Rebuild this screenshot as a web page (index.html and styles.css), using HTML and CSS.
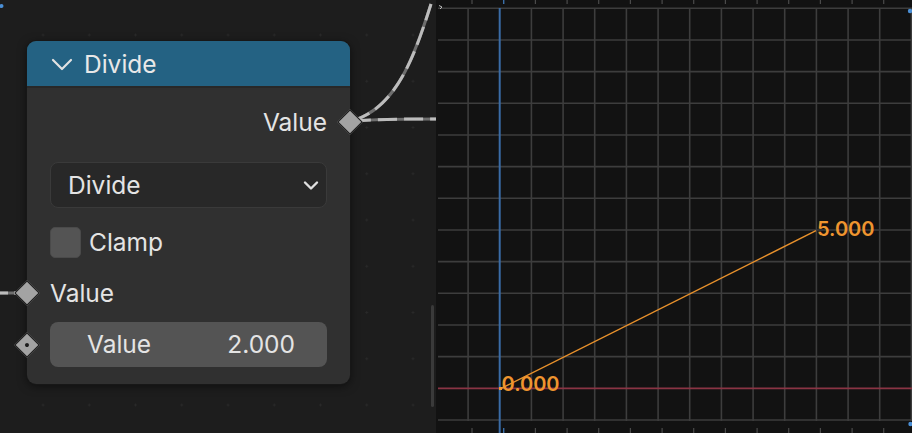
FILE: index.html
```html
<!DOCTYPE html>
<html>
<head>
<meta charset="utf-8">
<link rel="stylesheet" href="styles.css">
</head>
<body>
<div class="app">
  <section class="node-editor">
    <svg class="links" width="436" height="433" viewBox="0 0 436 433">
      <g fill="none" stroke-width="3">
        <path class="link-base" d="M352 121 C 396 108, 414 58, 431 4"/>
        <path class="link-dash" d="M352 121 C 396 108, 414 58, 431 4"/>
        <path class="link-base" d="M352 121 C 380 119, 410 119, 436 119"/>
        <path class="link-dash" d="M352 121 C 380 119, 410 119, 436 119"/>
        <path class="link-base" d="M0 293 L27 293"/>
        <path class="link-dash in" d="M0 293 L27 293"/>
      </g>
      <circle cx="1.5" cy="6" r="2" fill="#4a8fd6"/>
    </svg>
    <div class="scrollbar"></div>

    <div class="node">
      <div class="node-header">
        <svg class="chev" width="22" height="13" viewBox="0 0 22 13"><path d="M2 2 L11 11 L20 2" fill="none" stroke="#e2e2e2" stroke-width="2.2" stroke-linecap="round" stroke-linejoin="round"/></svg>
        <span class="title">Divide</span>
      </div>
      <div class="node-body">
        <div class="row out-row">
          <span>Value</span>
          <span class="socket socket-out"></span>
        </div>
        <div class="dropdown">
          <span>Divide</span>
          <svg width="16" height="11" viewBox="0 0 16 11"><path d="M2 2.5 L8 8.5 L14 2.5" fill="none" stroke="#e0e0e0" stroke-width="2.4" stroke-linecap="round" stroke-linejoin="round"/></svg>
        </div>
        <div class="check-row">
          <span class="checkbox"></span>
          <span>Clamp</span>
        </div>
        <div class="row in-row">
          <span class="socket socket-in"></span>
          <span>Value</span>
        </div>
        <div class="field">
          <span class="socket socket-in dotted"></span>
          <span>Value</span>
          <span>2.000</span>
        </div>
      </div>
    </div>
  </section>

  <section class="graph">
    <svg width="476" height="433" viewBox="0 0 476 433">
      <g stroke="#3d3d3d" stroke-width="1.6">
        <line x1="2" y1="8.3" x2="476" y2="8.3"/>
        <line x1="2" y1="40" x2="476" y2="40"/>
        <line x1="2" y1="71.6" x2="476" y2="71.6"/>
        <line x1="2" y1="103.3" x2="476" y2="103.3"/>
        <line x1="2" y1="135" x2="476" y2="135"/>
        <line x1="2" y1="166.6" x2="476" y2="166.6"/>
        <line x1="2" y1="198.3" x2="476" y2="198.3"/>
        <line x1="2" y1="230" x2="476" y2="230"/>
        <line x1="2" y1="261.6" x2="476" y2="261.6"/>
        <line x1="2" y1="293.3" x2="476" y2="293.3"/>
        <line x1="2" y1="325" x2="476" y2="325"/>
        <line x1="2" y1="356.6" x2="476" y2="356.6"/>
        <line x1="2" y1="420" x2="476" y2="420"/>
        <line x1="32.1" y1="8" x2="32.1" y2="421"/>
        <line x1="95.4" y1="8" x2="95.4" y2="421"/>
        <line x1="127.1" y1="8" x2="127.1" y2="421"/>
        <line x1="158.7" y1="8" x2="158.7" y2="421"/>
        <line x1="190.4" y1="8" x2="190.4" y2="421"/>
        <line x1="222.1" y1="8" x2="222.1" y2="421"/>
        <line x1="253.7" y1="8" x2="253.7" y2="421"/>
        <line x1="285.4" y1="8" x2="285.4" y2="421"/>
        <line x1="317.1" y1="8" x2="317.1" y2="421"/>
        <line x1="348.7" y1="8" x2="348.7" y2="421"/>
        <line x1="380.4" y1="8" x2="380.4" y2="421"/>
        <line x1="412.1" y1="8" x2="412.1" y2="421"/>
        <line x1="443.7" y1="8" x2="443.7" y2="421"/>
        <line x1="475.4" y1="8" x2="475.4" y2="421"/>
      </g>
      <g stroke="#4a4a4a" stroke-width="1.2">
        <path d="M36 0 V4 M99.4 0 V4 M131.1 0 V4 M162.7 0 V4 M194.4 0 V4 M226.1 0 V4 M257.7 0 V4 M289.4 0 V4 M321.1 0 V4 M352.7 0 V4 M384.4 0 V4 M416.1 0 V4 M447.7 0 V4"/>
        <path d="M36 428 V433 M99.4 428 V433 M131.1 428 V433 M162.7 428 V433 M194.4 428 V433 M226.1 428 V433 M257.7 428 V433 M289.4 428 V433 M321.1 428 V433 M352.7 428 V433 M384.4 428 V433 M416.1 428 V433 M447.7 428 V433"/>
      </g>
      <path d="M67.7 0 V4 M67.7 428 V433" stroke="#3b6fa8" stroke-width="1.4"/>
      <line x1="2" y1="388.3" x2="476" y2="388.3" stroke="#8a3444" stroke-width="1.8"/>
      <line x1="63.7" y1="8" x2="63.7" y2="433" stroke="#3a6ca6" stroke-width="2"/>
      <path d="M3 5.5 L6 7 L4 9" fill="none" stroke="#bdbdbd" stroke-width="1"/>
      <circle cx="474" cy="11" r="2.2" fill="#4a8fd6"/>
      <circle cx="474.5" cy="424" r="2.2" fill="#4a8fd6"/>
      <line x1="64" y1="389" x2="380" y2="230.7" stroke="#e8912c" stroke-width="1.5"/>
      <rect x="63" y="387" width="3" height="3" fill="#f29a32"/>
      <text class="val" x="65.5" y="391">0.000</text>
      <text class="val" x="381" y="236">5.000</text>
    </svg>
  </section>
</div>
</body>
</html>
```

FILE: styles.css
```css
* { box-sizing: border-box; }
html, body { margin: 0; padding: 0; }
body {
  width: 912px;
  height: 433px;
  overflow: hidden;
  background: #1d1d1d;
  font-family: "Inter", "DejaVu Sans", sans-serif;
  color: #e4e4e4;
}
.app {
  display: flex;
  width: 912px;
  height: 433px;
}
.node-editor {
  position: relative;
  width: 436px;
  height: 433px;
  flex: none;
  background-color: #1d1d1d;
  background-image: radial-gradient(circle, #2a2a2a 0.9px, transparent 1.4px);
  background-size: 46.25px 46.25px;
  background-position: 19.9px 11.9px;
}
.links {
  position: absolute;
  left: 0;
  top: 0;
}
.link-base { stroke: #6e6e6e; }
.link-dash { stroke: #bcbcbc; stroke-dasharray: 19 7; }
.link-dash.in { stroke-dasharray: 8 6; }
.scrollbar {
  position: absolute;
  left: 431px;
  top: 305px;
  width: 3px;
  height: 102px;
  border-radius: 2px;
  background: #3a3a3a;
}
.node {
  position: absolute;
  left: 27px;
  top: 41px;
  width: 323px;
  height: 343px;
  border-radius: 9px;
  background: #303030;
  box-shadow: 0 0 0 1px #171717, 0 2px 10px rgba(0,0,0,0.55);
  font-size: 24.5px;
  line-height: 1;
}
.node-header {
  height: 47px;
  background: #246283;
  border-radius: 9px 9px 0 0;
  border-bottom: 2px solid #282828;
  display: flex;
  align-items: center;
  padding-left: 24px;
  gap: 11px;
}
.node-header .chev { margin-top: 2px; }
.title { color: #e8e8e8; margin-top: 1px; }
.node-body {
  padding: 12px 23px 17px 23px;
  display: flex;
  flex-direction: column;
}
.row {
  position: relative;
  display: flex;
  align-items: center;
}
.out-row {
  height: 44px;
  justify-content: flex-end;
}
.in-row {
  height: 30px;
  margin-top: 20px;
}
.socket {
  position: absolute;
  width: 18px;
  height: 18px;
  background: #a3a3a3;
  border: 1px solid #1a1a1a;
  transform: rotate(45deg);
  top: 50%;
  margin-top: -9px;
}
.socket-out { right: -32px; }
.socket-in { left: -32px; }
.dotted::after {
  content: "";
  position: absolute;
  left: 6px;
  top: 6px;
  width: 4px;
  height: 4px;
  border-radius: 50%;
  background: #1c1c1c;
}
.dropdown {
  margin-top: 18px;
  height: 46px;
  border-radius: 8px;
  background: #282828;
  border: 1px solid #3a3a3a;
  display: flex;
  align-items: center;
  justify-content: space-between;
  padding: 0 7px 0 17px;
}
.check-row {
  margin-top: 19px;
  height: 31px;
  display: flex;
  align-items: center;
  gap: 8px;
}
.checkbox {
  width: 31px;
  height: 31px;
  border-radius: 5px;
  background: #545454;
  border: 1px solid #4a4a4a;
}
.field {
  position: relative;
  margin-top: 14px;
  height: 45px;
  border-radius: 8px;
  background: #545454;
  display: flex;
  align-items: center;
  justify-content: space-between;
  padding: 0 32px 0 37px;
}
.graph {
  flex: 1;
  height: 433px;
  background: #121212;
}
.graph svg { display: block; }
.val {
  font-family: "Inter", "DejaVu Sans", sans-serif;
  font-size: 20px;
  font-weight: 600;
  fill: #ef952f;
}
```
